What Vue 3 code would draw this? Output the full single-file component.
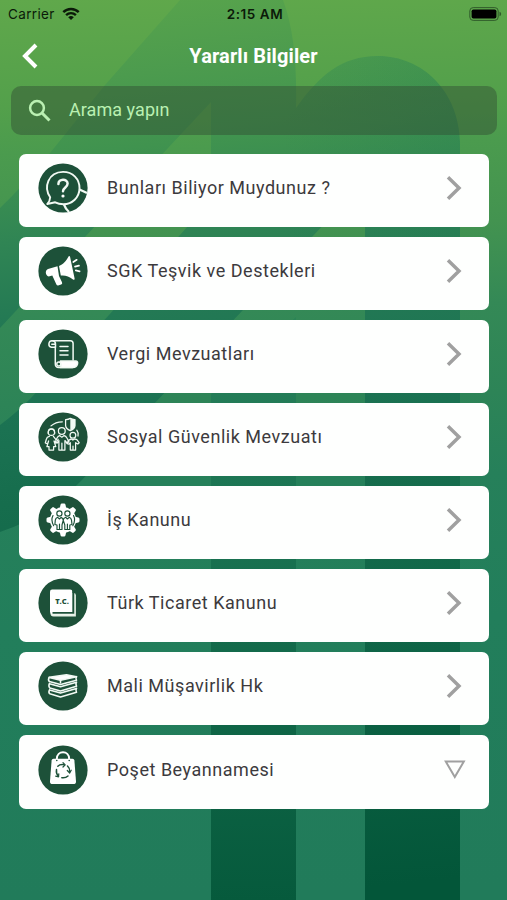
<script setup>
const items = [
  { icon: 'question', label: 'Bunları Biliyor Muydunuz ?' },
  { icon: 'megaphone', label: 'SGK Teşvik ve Destekleri' },
  { icon: 'scroll', label: 'Vergi Mevzuatları' },
  { icon: 'family', label: 'Sosyal Güvenlik Mevzuatı' },
  { icon: 'gear', label: 'İş Kanunu' },
  { icon: 'code', label: 'Türk Ticaret Kanunu' },
  { icon: 'books', label: 'Mali Müşavirlik Hk' },
  { icon: 'bag', label: 'Poşet Beyannamesi', expandable: true },
]
const teeth = [0, 45, 90, 135, 180, 225, 270, 315]
</script>

<template>
  <div class="screen">
    <svg class="backdrop" viewBox="0 0 507 900" preserveAspectRatio="none" aria-hidden="true">
      <defs>
        <linearGradient id="base" gradientUnits="userSpaceOnUse" x1="0" y1="0" x2="25" y2="900">
          <stop offset="0" stop-color="#60a84b" />
          <stop offset=".12" stop-color="#53a04b" />
          <stop offset=".17" stop-color="#4b9b4e" />
          <stop offset=".26" stop-color="#439350" />
          <stop offset=".35" stop-color="#348956" />
          <stop offset=".45" stop-color="#2d8457" />
          <stop offset=".54" stop-color="#26805a" />
          <stop offset=".7" stop-color="#227e5b" />
          <stop offset="1" stop-color="#217b5a" />
        </linearGradient>
        <linearGradient id="shade" gradientUnits="userSpaceOnUse" x1="150" y1="0" x2="240" y2="900">
          <stop offset="0" stop-color="#57a34c" />
          <stop offset=".08" stop-color="#4c9b4e" />
          <stop offset=".16" stop-color="#40934f" />
          <stop offset=".25" stop-color="#308554" />
          <stop offset=".34" stop-color="#237954" />
          <stop offset=".44" stop-color="#1c7353" />
          <stop offset=".54" stop-color="#166d4d" />
          <stop offset=".75" stop-color="#0e6446" />
          <stop offset="1" stop-color="#035639" />
        </linearGradient>
        <linearGradient id="stem" x1="0" y1="0" x2="0" y2="1">
          <stop offset="0" stop-color="#2b8456" />
          <stop offset=".15" stop-color="#237b57" />
          <stop offset=".3" stop-color="#1c7553" />
          <stop offset=".6" stop-color="#12694a" />
          <stop offset="1" stop-color="#065a3c" />
        </linearGradient>
        <linearGradient id="archShade" gradientUnits="userSpaceOnUse" x1="280" y1="0" x2="460" y2="0">
          <stop offset="0" stop-color="#177452" stop-opacity="0" />
          <stop offset="1" stop-color="#177452" stop-opacity=".4" />
        </linearGradient>
      </defs>
      <rect width="507" height="900" fill="url(#base)" />
      <path fill="url(#shade)" d="M180 0 L165 17 L105 85 L50 153 Q25 184 0 208 V328 L211 102 V200 L109 315 L30 399 Q15 414 0 425 V532 Q46 517 82 480 L365 181 V900 H460 V142 C459 92 423 56 378 56 C341 56 319 76 296 108 C297 65 294 30 283 0Z" />
      <path fill="url(#archShade)" d="M296 108 C319 76 341 56 378 56 C423 56 459 92 460 142 V300 H365 V181 L240 313 V167Z" opacity=".4" />
      <path fill="url(#stem)" d="M296 317 V900 H211 V394Z" />
    </svg>

    <header class="status">
      <div class="carrier">
        <span>Carrier</span>
        <svg width="18" height="14" viewBox="0 0 18 14" fill="none" stroke="#0b1a09" stroke-width="2.4">
          <path d="M1.3 5.2C5.5.9 12.5.9 16.7 5.2M4.1 8.1C6.9 5.4 11.1 5.4 13.9 8.1" />
          <path d="M6.2 10.2Q9 7.6 11.8 10.2L9 13Z" fill="#0b1a09" stroke="none" />
        </svg>
      </div>
      <div class="clock">2:15 AM</div>
      <svg class="battery" width="33" height="14" viewBox="0 0 33 14">
        <rect x=".8" y=".6" width="28.4" height="12.8" rx="3.4" fill="none" stroke="#315c2b" stroke-width="1" />
        <rect x="2.6" y="2.4" width="24.8" height="9.2" rx="1.8" fill="#000" />
        <path d="M30.5 4.8Q32.2 5.2 32.2 7T30.5 9.2Z" fill="#315c2b" />
      </svg>
    </header>

    <nav class="navbar">
      <svg class="back" width="18" height="26" viewBox="0 0 18 26" fill="none" stroke="#fff" stroke-width="4">
        <path d="M15 2L4 13L15 24" />
      </svg>
      <h1>Yararlı Bilgiler</h1>
    </nav>

    <div class="search">
      <svg width="24" height="24" viewBox="0 0 24 24" fill="none" stroke="#baf0b2" stroke-width="2.5">
        <circle cx="9" cy="9" r="6.9" />
        <path d="M14 14L21.5 21.5" stroke-width="3" />
      </svg>
      <span>Arama yapın</span>
    </div>

    <main class="list">
      <div v-for="item in items" :key="item.icon" class="card">
        <svg class="badge" viewBox="0 0 50 50" fill="none" stroke="#f2faf4" stroke-linecap="round" stroke-linejoin="round">
          <circle cx="25" cy="25" r="24.6" fill="#1d5139" stroke="none" />

          <g v-if="item.icon === 'question'" stroke-width="1.9">
            <path d="M12.2 34.2C5.2 24 10.2 9.2 25 8.9C35 8.9 41.5 16 41.5 25C41.5 34.6 34 41.2 25.5 41.2C22 41.2 19.6 40.6 17.2 39.3L9.3 41Q12 38 12.2 34.2Z" />
            <path d="M41.5 26.5L49 30M25.8 41.2Q27.4 45.8 31 49" stroke-linecap="butt" stroke-width="2.3" />
            <path d="M20.4 21C20.4 15.4 29.6 15.3 29.6 20.6C29.6 24.4 25 24.5 25 28.3" stroke-width="2.5" />
            <circle cx="25" cy="33" r="1.6" fill="#fff" stroke="none" />
          </g>

          <g v-else-if="item.icon === 'megaphone'" stroke="none" fill="#fff">
            <path d="M19.5 20.3L10 23C6.8 24.2 7.2 29.6 10.7 30.4L14.3 29.6L18.4 38.4Q19.1 39.8 20.8 39.2L23.2 38.5Q24.7 38 24 36.3L21 30Z" />
            <path d="M21 20.1C25 18.7 28.5 14.8 30.5 10.6C31 9.7 31.9 10 32.1 11L36.6 32.4C36.8 33.7 35.9 34.1 35 33.4C31 30.4 27 29 22.8 29.6Z" />
            <path d="M35.3 16L38.7 13.8M37 20.6L41 19.6M37.8 24.4L41.6 25.3" fill="none" stroke="#fff" stroke-width="1.7" />
          </g>

          <g v-else-if="item.icon === 'scroll'" stroke-width="1.5">
            <path d="M14 11.7H32.5Q35.1 11.7 35.1 14.5V31M17.3 18V35Q17.3 38.4 20.7 38.4H34.5" />
            <path d="M17.5 18.3H13.5A3.3 3.3 0 1 1 17.5 15.2V18.3M13.8 15.2H17" />
            <path d="M22 17.5H30M22 21.8H30M22 26H30" />
            <path d="M22.4 32.1H37.6Q40.3 32.2 39.5 35Q38.6 38.5 34.8 38.5H22.2Q24.6 36.1 22 34.5Z" fill="#fff" />
            <circle cx="20.8" cy="35" r="2" fill="#1d5139" />
          </g>

          <g v-else-if="item.icon === 'family'" stroke-width="1.25">
            <circle cx="13.4" cy="20.2" r="3.2" />
            <path d="M10.2 21.3Q10.4 16.3 13.4 16.8Q16.4 16.3 16.7 21.3" />
            <circle cx="23.8" cy="19" r="3.4" />
            <circle cx="34.9" cy="23.3" r="2.9" />
            <path d="M11.4 24.3Q8.9 24.8 8.4 27L7.3 31L9.6 31.8L10.6 29L8.9 34.6H11V38H15.6V34.6H17.8L16 29L18.1 31L20.2 27.3M15.4 24.3L17.8 27.3" />
            <path d="M21.6 23.6Q19.9 24.2 18.9 26.2L17.3 30L19.4 31L20.9 28.5V38H26.9V28.5L29 31L31 29.7L28.8 25.8Q27.9 24 26.1 23.6L23.8 25.2ZM23.9 31V37.5" />
            <path d="M33.3 26.9L30.6 28.4L29 31.6L31 32.2L32.3 30.7V38H37.6V30.7L39.8 32L41.2 30.7L38.8 27.7L36.5 26.9L34.9 28.1ZM35 34V38" />
            <path d="M13 13.9Q17.5 9.8 24.3 9.8M38.8 18.2Q40.6 20.5 40 24" />
            <path d="M27.6 7.6Q30.2 7.7 32.3 6.4Q34.5 7.7 37 7.6V13.6Q36.7 16.8 32.3 18.6Q27.9 16.8 27.6 13.6Z" />
            <path d="M32.3 6.4Q34.5 7.7 37 7.6V13.6Q36.7 16.8 32.3 18.6Z" fill="#f2faf4" stroke="none" />
          </g>

          <g v-else-if="item.icon === 'gear'">
            <g fill="#fff" stroke="none">
              <path v-for="a in teeth" :key="a" d="M21.6 14L22.5 9.7Q22.7 8.5 24 8.5H26Q27.3 8.5 27.5 9.7L28.4 14Z" :transform="`rotate(${a} 25 25)`" />
              <circle cx="25" cy="25" r="13" />
            </g>
            <g stroke="#1d5139" stroke-width="1.15">
              <circle cx="21.4" cy="18.5" r="2.6" />
              <circle cx="29.4" cy="18.5" r="2.6" />
              <path d="M19.7 22.3Q17.5 23.1 17.3 25.1L16.9 29.5L19 30V34.5H24V30L25.2 25.3Q25 23 23.1 22.3L21.5 24ZM21.5 29V34M27.8 22.3L29.4 24L31.2 22.3Q33.2 23 33.5 25.1L34 29.5L31.8 30V34.5H26.8V30L25.2 25.3Q25.4 23 27.8 22.3ZM29.4 29V34" />
              <path d="M15 20.5Q12.5 25 15.7 30.7M35.5 20.5Q38 25 34.8 30.7" />
            </g>
          </g>

          <g v-else-if="item.icon === 'code'">
            <path d="M15 15H35.5Q37.9 15 37.9 17.2V38.5H15.5Q12.5 38.4 12.5 35.6V17Q12.5 15 15 15Z" fill="#e7f2e7" stroke="none" />
            <path d="M14.1 11.5H32.1Q34.4 11.5 34.4 13.8V36.2H14.5Q12 36.1 12 33.6V13.6Q12 11.5 14.1 11.5Z" fill="#fff" stroke="none" />
            <path d="M14.5 34.9H35.3V13.3" stroke="#1d5139" stroke-width="1.9" stroke-linecap="butt" stroke-linejoin="miter" />
            <text class="code-label" x="24" y="25.8">T.C.</text>
          </g>

          <g v-else-if="item.icon === 'books'" stroke-width="1.6">
            <path d="M11.2 16.4L28.5 13.9L38.5 15.7L22.5 19.3Z" fill="#fff" />
            <path d="M11.2 16.4Q9.8 18.8 11.3 20.5L22.5 23.6L38.5 19.2Q37.3 17.4 38.5 15.7M22.5 19.3V21.6" />
            <path d="M11.5 22.4Q10.2 25.1 11.8 27L22.5 29.9L38.5 25.2Q37.4 23 38.5 21.2M11.5 22.8L22.5 25.8L38.5 21.2" />
            <path d="M11.5 28.8Q10.2 31.2 11.8 32.8L22.5 36L38.5 31.3Q37.4 29.4 38.5 27.4M11.5 29L22.5 32.1L38.5 27.4" />
          </g>

          <g v-else stroke="none">
            <path d="M18.8 15.5V14C18.8 4.9 31.2 4.9 31.2 14V15.5" stroke="#fff" stroke-width="2" />
            <path d="M15.5 13.8H34.5Q36.2 13.8 36.4 15.6L38 36.3Q38.2 39.1 35.4 39.1H14.6Q11.8 39.1 12 36.3L13.6 15.6Q13.8 13.8 15.5 13.8Z" fill="#fff" />
            <circle cx="18.8" cy="15.5" r=".8" fill="#1d5139" />
            <circle cx="31.2" cy="15.5" r=".8" fill="#1d5139" />
            <g stroke="#1d5139" stroke-width="1.5">
              <path d="M19.8 21.2Q21.8 19.2 26 19.7M29.5 21Q32 23.3 31.7 26.4M30 31Q27.6 33.2 23.8 32.7M20.5 31.2Q17.8 28.6 18.5 24.6" />
              <path d="M25 17.6L27.2 19.8L25 22M29.3 25.5L31.7 28L33.2 25.2M20.8 28.9L20.5 31.8L17.7 31.2" stroke-width="1.2" />
            </g>
          </g>
        </svg>

        <span class="label">{{ item.label }}</span>

        <svg v-if="item.expandable" class="mark" width="22" height="26" viewBox="0 0 22 26" fill="none" stroke="#a0a0a0" stroke-width="2">
          <path d="M1.8 4.6H19.8L10.8 20Z" />
        </svg>
        <svg v-else class="mark" width="22" height="26" viewBox="0 0 22 26" fill="none" stroke="#a0a0a0" stroke-width="3.5">
          <path d="M4 2.2L15 13L4 23.8" />
        </svg>
      </div>
    </main>
  </div>
</template>

<style>
body {
  margin: 0;
}
</style>

<style scoped>
.screen {
  position: relative;
  isolation: isolate;
  width: 507px;
  height: 900px;
  overflow: hidden;
  font-family: Roboto, "Liberation Sans", sans-serif;
}
.backdrop {
  position: absolute;
  inset: 0;
  width: 507px;
  height: 900px;
  z-index: -1;
}
.status {
  display: grid;
  grid-template-columns: 1fr auto 1fr;
  align-items: center;
  height: 27px;
  padding: 0 5px 0 8px;
  box-sizing: border-box;
  color: #0b1a09;
  font-family: Inter, sans-serif;
  font-size: 13.5px;
}
.carrier {
  display: flex;
  align-items: center;
  gap: 7px;
  letter-spacing: 0.35px;
}
.clock {
  font-weight: 600;
  font-size: 13.5px;
  letter-spacing: 0.55px;
}
.battery {
  justify-self: end;
}
.navbar {
  display: grid;
  grid-template-columns: 18px 1fr 18px;
  align-items: center;
  height: 58px;
  padding: 0 21px;
}
.back {
  display: block;
}
h1 {
  margin: 0;
  padding-bottom: 1px;
  text-align: center;
  color: #fff;
  font-size: 20px;
  line-height: 24px;
  font-weight: 700;
  letter-spacing: 0.1px;
}
.search {
  display: flex;
  align-items: center;
  gap: 17px;
  height: 49px;
  margin: 1px 10px 0 11px;
  padding: 0 17px;
  box-sizing: border-box;
  border-radius: 10px;
  background: rgba(49, 76, 50, 0.45);
  color: #baf0b2;
  font-size: 18px;
  letter-spacing: 0.05px;
}
.search span {
  line-height: 24px;
  padding-bottom: 2px;
}
.list {
  display: flex;
  flex-direction: column;
  gap: 10px;
  margin: 18.5px 18px 0 19px;
}
.card {
  display: flex;
  align-items: center;
  height: 73.15px;
  padding: 0 23px 5px 19px;
  box-sizing: border-box;
  border-radius: 7px;
  background: #fefffe;
}
.badge {
  flex: none;
  width: 50px;
  height: 50px;
}
.label {
  flex: 1;
  margin-left: 19px;
  color: #3c3a3d;
  font-size: 18px;
  line-height: 24px;
  letter-spacing: 0.53px;
  white-space: nowrap;
}
.mark {
  flex: none;
}
.code-label {
  fill: #1d5139;
  stroke: none;
  font-family: "Open Sans", sans-serif;
  font-size: 7.5px;
  font-weight: 800;
  text-anchor: middle;
}
</style>
